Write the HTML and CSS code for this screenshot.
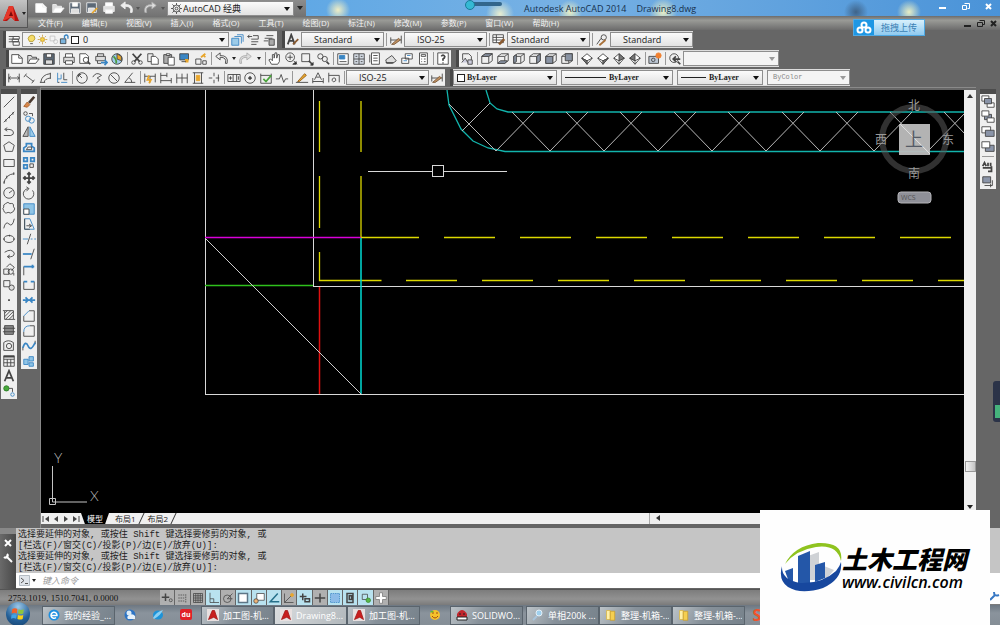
FILE: index.html
```html
<!DOCTYPE html>
<html lang="zh-CN">
<head>
    <meta charset="UTF-8">
    <meta name="viewport" content="width=device-width, initial-scale=1.0">
    <title>Autodesk AutoCAD 2014 - Drawing8.dwg</title>
    <link rel="stylesheet" href="styles.css">
</head>
<body>
<div class="app">
    <header class="top">
        <button class="app-btn" aria-label="应用程序菜单">
            <svg width="18" height="18" viewBox="0 0 18 18"><path d="M1 16L7 1h4l6 15h-4l-4-4-4 4z" fill="#b5120f"/><path d="M7 1h4l2 15-4-4-8 4z" fill="#e5382a"/><path d="M9 6l2 5H7z" fill="#7b0c0a"/></svg>
            <span class="tri"></span>
        </button>
        <div class="top-rows">
            <div class="titlebar">
                <div class="quick">
                    <div class="tools" data-icons="new open save saveas print undo . redo ."></div>
                    <label class="combo workspace"><span data-icon="gear"></span><select aria-label="工作空间"><option>AutoCAD 经典</option></select></label>
                    <button class="more" aria-label="自定义"><span class="tri"></span></button>
                </div>
                <h1><span>Autodesk AutoCAD 2014</span><span>Drawing8.dwg</span></h1>
                <div class="win-btns">
                    <button aria-label="最小化"><svg width="9" height="9"><path d="M1 6h7" stroke="#fff" stroke-width="2"/></svg></button>
                    <button aria-label="还原"><svg width="9" height="9"><path d="M3.500 1.500h5v5h-2M1.500 3.500h4v4h-4z" stroke="#fff" fill="none"/></svg></button>
                    <button aria-label="关闭"><svg width="9" height="9"><path d="M2 2l5 5M7 2L2 7" stroke="#fff" stroke-width="2"/></svg></button>
                </div>
                <div class="slider-mark"></div>
            </div>
            <nav class="menubar">
                <button>文件(F)</button><button>编辑(E)</button><button>视图(V)</button><button>插入(I)</button>
                <button>格式(O)</button><button>工具(T)</button><button>绘图(D)</button><button>标注(N)</button>
                <button>修改(M)</button><button>参数(P)</button><button>窗口(W)</button><button>帮助(H)</button>
                <div class="doc-btns">
                    <button aria-label="最小化文档"><svg width="9" height="9"><path d="M1 7h7" stroke="#222" stroke-width="2"/></svg></button>
                    <button aria-label="还原文档"><svg width="9" height="9"><path d="M3.500 1.500h5v4h-2M1.500 3.500h5v4h-5z" stroke="#222" fill="none"/></svg></button>
                    <button aria-label="关闭文档"><svg width="9" height="9"><path d="M2 2l5 5M7 2L2 7" stroke="#222" stroke-width="2"/></svg></button>
                </div>
            </nav>
        </div>
        <button class="upload"><span class="upload-icon"><svg width="16" height="14" viewBox="0 0 16 14" fill="none" stroke="#fff" stroke-width="2"><circle cx="8" cy="4" r="2.500"/><circle cx="4" cy="9" r="2.500"/><circle cx="12" cy="9" r="2.500"/></svg></span><span class="upload-text">拖拽上传</span></button>
    </header>

    <div class="bars">
        <div class="bar">
            <div class="strip">
                <div class="tools" data-icons="layers"></div>
                <label class="combo layer"><span data-icon="bulb"></span><span data-icon="sun"></span><span data-icon="freeze"></span><span data-icon="lock"></span><i class="swatch"></i><select aria-label="图层"><option>0</option></select></label>
                <div class="tools" data-icons="layercur layerprev layerstate"></div>
            </div>
            <div class="strip styles">
                <div class="tools" data-icons="textstyle"></div>
                <label class="combo wide"><select aria-label="文字样式"><option>Standard</option></select></label>
                <div class="tools" data-icons="| dimstyle"></div>
                <label class="combo wide"><select aria-label="标注样式"><option>ISO-25</option></select></label>
                <div class="tools" data-icons="| tablestyle"></div>
                <label class="combo near"><select aria-label="表格样式"><option>Standard</option></select></label>
                <div class="tools" data-icons="| leader"></div>
                <label class="combo wide"><select aria-label="引线样式"><option>Standard</option></select></label>
            </div>
        </div>
        <div class="bar standard">
            <div class="strip">
                <div class="tools" data-icons="new open save | print preview publish dwf | cut copy paste match block | undo . redo . | pan zoomrt zoomwin zoomprev | props center palette sheet markup calc | help"></div>
            </div>
            <div class="strip">
                <div class="tools" data-icons="views | cubetop cubebottom cubeleft cuberight cubefront cubeback | isosw isose isone isonw | camera | zoomback"></div>
                <label class="combo views off"><select aria-label="视图" disabled><option></option></select></label>
            </div>
        </div>
        <div class="bar">
            <div class="strip">
                <div class="tools" data-icons="dimlin dimali dimarc dimord | radius jog diameter angle | qdim baseline cont dimspace dimbreak | tol centermark inspect jogline | dimedit dimtext dimupdate |"></div>
                <label class="combo wide"><select aria-label="标注样式控制"><option>ISO-25</option></select></label>
                <div class="tools" data-icons="dimstyle"></div>
            </div>
            <div class="strip mono">
                <label class="combo colour"><i class="swatch"></i><select aria-label="颜色"><option>ByLayer</option></select></label>
                <label class="combo linetype"><i class="line"></i><select aria-label="线型"><option>ByLayer</option></select></label>
                <label class="combo weight"><i class="line"></i><select aria-label="线宽"><option>ByLayer</option></select></label>
                <label class="combo plot off"><select aria-label="打印样式" disabled><option>ByColor</option></select></label>
            </div>
        </div>
    </div>

    <main class="work">
        <div class="side draw"><div class="tools" data-icons="line xline pline polygon rect arc circle revcloud spline ellipse ellarc insert mkblock point hatch gradient region table mtext addsel"></div></div>
        <div class="side modify"><div class="tools" data-icons="erase copyobj mirror offset array move rotate scale stretch trim extend breakpt break join chamfer fillet blend explode"></div></div>
        <section class="doc">
            <div class="view">
                <svg class="canvas" viewBox="41 90 924 423" preserveAspectRatio="xMinYMin slice" fill="none">
                    <g stroke="#d8d8d8">
                        <path d="M205.500 90v304H965M313.500 90v196H965" shape-rendering="crispEdges"/>
                        <path d="M368 171.500h64M443 171.500h64M432.500 165.500h11v11h-11z" shape-rendering="crispEdges"/>
                    </g>
                    <path d="M205 237.500h156" stroke="#d800d8" stroke-width="1.500"/>
                    <path d="M205 285.500h108" stroke="#2fc01c" stroke-width="1.500"/>
                    <g stroke="#dcd800" stroke-width="1.300">
                        <path d="M319.500 101v51M319.500 176v52M319.500 252v28.500h62M361 101v51M361 176v61M361 237.500h58"/>
                        <path d="M444 237.500H965" stroke-dasharray="51 25"/>
                        <path d="M406 280.500H965" stroke-dasharray="51 25"/>
                    </g>
                    <path d="M361 238v156" stroke="#00dcd4" stroke-width="1.500"/>
                    <path d="M319.500 287v107" stroke="#e01010" stroke-width="1.500"/>
                    <path d="M205 238l156 156" stroke="#ccc"/>
                    <path d="M447 90l2 15 12 24 12 12 15 7 17 3.500H965M486 90l4 13 7 6 11 3H965" stroke="#12b4ac" stroke-width="1.300"/>
                    <path d="M449 104l47 47 38-39M490 103l-28 28M512 112l38 39 38-39M566 112l38 39 38-39M620 112l38 39 38-39M674 112l38 39 38-39M728 112l38 39 38-39M782 112l38 39 38-39M836 112l38 39 38-39M890 112l38 39 38-39M944 112l21 22" stroke="#b9b9b9"/>
                    <path d="M52.500 466v36H87M49.500 498.500h6v6h-6z" stroke="#c4c4c4"/>
                    <g class="ucs"><text x="54" y="463">Y</text><text x="90" y="501">X</text></g>
                    <circle cx="914" cy="139" r="32" stroke="#5a5a5a" stroke-opacity=".55" stroke-width="6"/>
                    <path d="M899 124h31v31h-31z" fill="#bdbdbd" fill-opacity=".95"/>
                    <path d="M900 124l30 30" stroke="#ddd"/>
                    <g class="compass"><text x="914" y="110">北</text><text x="881" y="144">西</text><text x="948" y="144">东</text><text x="914" y="178">南</text></g>
                    <text class="face" x="914" y="146">上</text>
                    <rect x="898" y="192" width="33" height="11" rx="3" fill="#8f9098" stroke="#b4b4b8"/>
                    <text class="wcs" x="901" y="200">WCS</text>
                </svg>
                <div class="vscroll"><span class="tri up"></span><span class="thumb"></span><span class="tri"></span></div>
            </div>
            <div class="tabs">
                <div class="tab-nav">
                    <button aria-label="第一个"><svg width="8" height="8"><path d="M1 1v6" stroke="#444"/><path d="M7 1v6L3 4z" fill="#444"/></svg></button>
                    <button aria-label="上一个"><svg width="8" height="8"><path d="M6 1v6L2 4z" fill="#444"/></svg></button>
                    <button aria-label="下一个"><svg width="8" height="8"><path d="M2 1v6l4-3z" fill="#444"/></svg></button>
                    <button aria-label="最后一个"><svg width="8" height="8"><path d="M7 1v6" stroke="#444"/><path d="M1 1v6l4-3z" fill="#444"/></svg></button>
                </div>
                <button class="tab active">模型</button>
                <button class="tab">布局1</button>
                <button class="tab">布局2</button>
                <div class="hscroll"><span class="tri left"></span></div>
            </div>
        </section>
        <div class="side order"><div class="tools" data-icons="front back above under | anno hatchback"></div></div>
    </main>

    <section class="command">
        <div class="cmd-grip">
            <button aria-label="关闭"><svg width="8" height="8"><path d="M1 1l6 6M7 1L1 7" stroke="#fff" stroke-width="2"/></svg></button>
            <button aria-label="自定义"><svg width="10" height="10"><path d="M3 3l6 6" stroke="#fff" stroke-width="2"/><path d="M4 1a2 2 0 1 1-3 3" stroke="#fff" stroke-width="2" fill="none"/></svg></button>
        </div>
        <div class="cmd-body">
            <div class="history">
                <p>选择要延伸的对象, 或按住 Shift 键选择要修剪的对象, 或</p>
                <p>[栏选(F)/窗交(C)/投影(P)/边(E)/放弃(U)]:</p>
                <p>选择要延伸的对象, 或按住 Shift 键选择要修剪的对象, 或</p>
                <p>[栏选(F)/窗交(C)/投影(P)/边(E)/放弃(U)]:</p>
            </div>
            <div class="prompt">
                <svg width="11" height="11"><path d="M.5.5h10v10H.5z" fill="#dfe4ea" stroke="#b4bcc4"/><path d="M2 3l3 2.500L2 8M6 8.500h3" stroke="#555" fill="none"/></svg>
                <span class="tri"></span>
                <input type="text" placeholder="键入命令" aria-label="键入命令">
            </div>
        </div>
    </section>

    <div class="status">
        <span class="coords">2753.1019, 1510.7041, 0.0000</span>
        <div class="tools" data-icons="infer snap grid ortho* polar osnap* osnap3d* otrack* ducs dyn* lwt tpy* qp* sc* plus"></div>
    </div>

    <footer class="taskbar">
        <button class="start" aria-label="开始"><svg width="14" height="14" viewBox="0 0 12 12"><path d="M1 2q2-1.500 4.500-.3L5 5.500Q3 4.500.5 5.500z" fill="#f0622a"/><path d="M6.500 2q2 1 4.500 0l-.5 3.500q-2 1-4.500 0z" fill="#8cc63f"/><path d="M.5 6.700q2-1 4.300 0L4.300 10Q2.500 9 0 10z" fill="#3fa4e8"/><path d="M6 6.800q2 1 4.500 0L10 10.300q-2 1-4.500 0z" fill="#fcd116"/></svg></button>
        <button class="task"><svg width="12" height="12" viewBox="0 0 12 12"><circle cx="6" cy="6" r="5.500" fill="#1d8fe0"/><path d="M3 6.500h6A3 3 0 1 0 8 8.500" stroke="#fff" stroke-width="1.500" fill="none"/></svg><span>我的经验_...</span></button>
        <div class="pins">
            <button aria-label="浏览器"><svg width="12" height="12"><circle cx="6" cy="6" r="5.500" fill="#2d74c4"/><circle cx="5" cy="4" r="2.500" fill="#dcecf8"/><path d="M4 10a4 3 0 0 1 7-3v3z" fill="#e8f2fa"/></svg></button>
            <button aria-label="IE"><svg width="12" height="12"><ellipse cx="6" cy="6" rx="5" ry="4.500" fill="#1c93d8"/><path d="M1 9q3-6 10-8Q9 6 2 10z" fill="#8ad0f4"/></svg></button>
            <button class="du">du</button>
        </div>
        <div class="group">
            <button class="task"><span data-icon="acad"></span><span>加工图-机...</span></button>
            <button class="task current"><span data-icon="acad"></span><span>Drawing8...</span></button>
            <button class="task"><span data-icon="acad"></span><span>加工图-机...</span></button>
        </div>
        <button class="pin" aria-label="聊天"><svg width="12" height="12"><circle cx="6" cy="6" r="5" fill="#f5c22c"/><path d="M3 4h2M7 4h2M3 7q3 4 6 0" stroke="#a34a12" fill="none"/><path d="M1 2h4l-2 2z" fill="#63b832"/></svg></button>
        <button class="task"><svg width="12" height="12"><path d="M1 5q5-8 10 0v3H1z" fill="#c3262d"/><path d="M3 5h2M7 5h2M1 8h10v3H1z" stroke="#222" fill="#fff"/></svg><span>SOLIDWO...</span></button>
        <div class="group last">
            <button class="task"><svg width="12" height="12"><path d="M5 7l-4 4" stroke="#a8c4dc" stroke-width="2"/><circle cx="7" cy="4" r="3" fill="#9fd0ee" stroke="#e4f0f8"/></svg><span>单相200k ...</span></button>
            <button class="task"><span data-icon="folder"></span><span>整理-机箱-...</span></button>
            <button class="task"><span data-icon="folder"></span><span>整理-机箱-...</span></button>
        </div>
        <button class="pin sogou" aria-label="输入法">S</button>
    </footer>

    <div class="edge-meter"></div>
    <button class="tray" aria-label="工具"><svg width="10" height="14"><path d="M0 11l5-5M4 3q0 5 5 3" stroke="#3878c4" stroke-width="2" fill="none"/></svg></button>

    <aside class="brand">
        <svg width="62" height="52" viewBox="0 0 62 52">
            <path d="M28 14l11-4v28H28z" fill="#cfd2d6"/><path d="M44 24l10 4-10 12z" fill="#cfd2d6"/>
            <path d="M18 14l12-5v32l-12 1z" fill="#2457a8"/><path d="M5 29l8-3v14H9z" fill="#2457a8"/><path d="M35 23l10-3v16l-10 4z" fill="#2457a8"/>
            <path d="M5 22Q14 4 38 1q26-1 23 18-4-17-25-14Q16 8 5 22z" fill="#8fc31f"/>
            <path d="M2 24q-1 14 18 17 22 1 36-12 4-5 5-9 2 17-18 26-22 7-35-1Q-2 38 2 24z" fill="#17479e"/>
        </svg>
        <div class="brand-text"><strong>土木工程网</strong><span>www.civilcn.com</span></div>
    </aside>
</div>
<script src="script.js"></script>
</body>
</html>
```

FILE: styles.css
```css
* { box-sizing: border-box; }
body { margin: 0; font-family: "Open Sans", "Noto Sans CJK SC", sans-serif; font-size: 9px; color: #222; background: #666; }
button, select, input { font: inherit; color: inherit; margin: 0; padding: 0; border: 0; background: none; border-radius: 0; }
svg { display: block; flex: none; }
p, h1 { margin: 0; font-weight: normal; }

.app { position: relative; display: flex; flex-direction: column; height: 100vh; overflow: hidden; }
.tri { display: block; width: 0; height: 0; flex: none; border: 3px solid transparent; border-top: 4px solid #222; border-bottom: 0; }
.tri.up { border-top: 0; border-bottom: 4px solid #333; }
.tri.left { border: 3px solid transparent; border-right: 4px solid #333; border-left: 0; }

/* title bar and menu */
.top { position: relative; display: flex; height: 30px; flex: none; background: #777; }
.app-btn { display: flex; align-items: center; gap: 2px; width: 28px; height: 28px; padding-left: 2px; background: linear-gradient(#c4c4c4, #8b8b8b); border: 1px solid #555; border-width: 0 1px 1px 0; }
.app-btn .tri { border-width: 3px 2px 0; }
.top-rows { flex: 1; }
.titlebar {
    position: relative;
    display: flex;
    align-items: center;
    height: 16px;
    background:
        radial-gradient(circle at 30px 10px, #f0eec4 0, transparent 12px) 280px 0 / 60px 16px no-repeat,
        radial-gradient(circle at 30px 14px, #e9eed0 0, transparent 14px) 442px 0 / 60px 16px no-repeat,
        radial-gradient(circle at 20px 12px, #e9eec4 0, transparent 12px) 522px 0 / 60px 16px no-repeat,
        radial-gradient(circle at 20px 12px, #e9eec4 0, transparent 14px) 615px 0 / 60px 16px no-repeat,
        radial-gradient(circle at 20px 12px, #e9eec4 0, transparent 12px) 861px 0 / 60px 16px no-repeat,
        radial-gradient(circle at 20px 12px, #3f6388 0, transparent 12px) 808px 0 / 60px 16px no-repeat,
        linear-gradient(90deg, #489fe6, #77b1e4 55%, #4a93d8);
}
.quick { display: flex; align-items: center; height: 16px; padding-left: 4px; background: linear-gradient(#8c8c8c, #737373); }
.quick .tools .tool { width: 17px; color: #eee; }
.quick .tools .drop { width: 8px; }
.quick .tools .drop .tri { border-top-color: #555; }
.workspace { width: 127px; }
.more { width: 12px; height: 16px; display: flex; align-items: center; justify-content: center; }
h1 { position: absolute; left: 496px; display: flex; gap: 10px; font-size: 9px; color: #16304d; white-space: nowrap; }
.win-btns, .doc-btns { display: flex; margin-left: auto; }
.win-btns { gap: 14px; padding: 0 7px 4px 0; }
.slider-mark { position: absolute; left: 440px; top: 2px; width: 34px; height: 4px; border-radius: 2px; background: #33668c; }
.slider-mark::before { content: ""; position: absolute; left: -3px; top: -2px; width: 8px; height: 8px; border-radius: 50%; background: #35b9d4; border: 1px solid #1a7a98; }
.menubar { display: flex; align-items: center; height: 14px; padding-left: 10px; gap: 19px; font-size: 8px; line-height: 14px; color: #f2f2f2; background: linear-gradient(#6c6c6c, #9a9b97 30%, #6c6c6c); }
.menubar button { white-space: nowrap; }
.doc-btns { gap: 4px; padding-right: 2px; }
.upload { position: absolute; right: 75px; top: 19px; display: flex; height: 17px; z-index: 2; border: 1px solid #4fa8e2; }
.upload-icon { display: flex; align-items: center; width: 20px; height: 15px; padding-left: 2px; background: #1e97e4; }
.upload-text { width: 50px; line-height: 15px; color: #3b7fb4; background: linear-gradient(#d8f0fc, #8fcaf0); }

/* toolbars */
.bars { display: flex; flex-direction: column; gap: 2px; padding: 1px 0; flex: none; background: #666; }
.bar { display: flex; gap: 8px; height: 17px; padding-left: 6px; }
.bar.standard { padding-left: 9px; }
.strip { display: flex; align-items: center; height: 17px; background: #efefef; border: 1px solid #ddd; border-width: 1px 0; box-shadow: -3px 0 0 #484848; }
.tools { display: flex; align-items: center; }
.tool { display: flex; align-items: center; justify-content: center; width: 16px; height: 15px; color: #444; }
.tool svg, [data-icon] svg { width: 14px; height: 14px; }
.drop { width: 9px; display: flex; justify-content: center; }
.drop .tri { border-width: 3px 2px 0; }
.sep { width: 1px; height: 13px; margin: 0 1px 0 2px; background: #999; }
.combo { position: relative; display: flex; align-items: center; height: 15px; padding-left: 3px; background: linear-gradient(#fbfbfb, #e2e2e2); border: 1px solid #8e8e8e; }
.combo::after { content: ""; position: absolute; right: 3px; top: 5px; border: 3px solid transparent; border-top: 4px solid #111; border-bottom: 0; }
.combo select { flex: 1; min-width: 0; height: 13px; line-height: 13px; appearance: none; opacity: 1; }
.combo.off { background: #f4f4f4; color: #888; }
.combo.off::after { border-top-color: #999; }
.layer { width: 207px; background: #f3f3f3; }
.layer [data-icon] svg { width: 11px; height: 11px; }
.workspace svg { margin-right: 1px; width: 11px; height: 11px; }
.combo.wide { padding-left: 12px; width: 83px; }
.styles .combo { width: 83px; }
.views { width: 96px; }
.swatch { width: 8px; height: 8px; margin-right: 2px; background: #fff; border: 1px solid #222; }
.layer .swatch { margin: 0 4px 0 1px; }
.line { height: 1px; background: #222; margin-right: 3px; }
.mono { gap: 4px; font-family: "Liberation Serif", serif; font-weight: bold; font-size: 8px; }
.colour { width: 104px; }
.linetype { width: 112px; }
.linetype .line { width: 41px; }
.weight { width: 86px; }
.weight .line { width: 25px; }
.plot { width: 83px; padding-left: 5px; font-family: "Liberation Mono", monospace; font-weight: normal; font-size: 7px; }

/* work area */
.work { display: flex; flex: 1; min-height: 0; padding: 0 4px 0 1px; align-items: flex-start; background: #666; }
.side { width: 16px; margin-top: 2px; padding-top: 5px; background: #4c4c4c; }
.side .tools { display: grid; grid-auto-rows: 1fr; background: #efefef; }
.draw .tools { height: 305px; }
.modify { margin-left: 4px; }
.modify .tools { height: 275px; }
.order { margin-left: 4px; }
.order .tools { grid-auto-rows: auto; }
.order .sep { width: 12px; height: 1px; margin: 2px; }
.doc { flex: 1; align-self: stretch; display: flex; flex-direction: column; margin-left: 3px; padding: 2px 0 4px; min-width: 0; border-top: 1px solid #8a8a8a; border-left: 1px solid #888; }
.view { display: flex; flex: 1; min-height: 0; }
.canvas { flex: 1; min-width: 0; height: 100%; background: #000; }
.vscroll { display: flex; flex-direction: column; align-items: center; width: 12px; padding: 4px 0; background: #f0f0f0; }
.thumb { width: 11px; height: 11px; margin: auto 0 33px; background: linear-gradient(90deg, #f4f4f4, #c4c4c4); border: 1px solid #999; }
.ucs text { font-family: "Lato", sans-serif; font-weight: 300; font-size: 14px; fill: #bbb; }
.compass text { font-size: 12px; fill: #999; text-anchor: middle; }
.face { font-size: 18px; fill: #555b66; text-anchor: middle; }
.wcs { font-size: 7px; fill: #555; }
.tabs { display: flex; align-items: center; height: 11px; flex: none; background: #f0f0f0; line-height: 11px; }
.tab-nav { display: flex; gap: 2px; padding: 0 1px; }
.tab { position: relative; height: 11px; padding: 0 6px; font-size: 8px; white-space: nowrap; }
.tab::after { content: ""; position: absolute; right: 0; top: 0; width: 1px; height: 11px; background: #333; transform: skewX(-25deg); }
.tab.active { color: #fff; background: #000; clip-path: polygon(0 0, 100% 0, 86% 100%, 14% 100%); }
.hscroll { width: 327px; margin-left: auto; height: 11px; padding: 2px 0 0 6px; border-left: 1px solid #aaa; }

/* command line */
.command { display: flex; height: 61px; flex: none; }
.cmd-grip { display: flex; flex-direction: column; align-items: center; gap: 6px; width: 16px; padding-top: 5px; background: linear-gradient(90deg, #6a6a6a, #484848); border-top: 6px solid #888; }
.cmd-body { flex: 1; }
.history { height: 45px; padding: 2px 2px 0; background: #c5c5c5; font-family: "Liberation Mono", "Noto Sans CJK SC", monospace; line-height: 10px; white-space: nowrap; }
.history p { height: 10px; }
.history p + p { margin-top: 1px; }
.prompt { display: flex; align-items: center; gap: 2px; height: 15px; padding-left: 3px; background: #fff; }
.prompt .tri { border-width: 3px 2px 0; }
.prompt input { flex: 1; padding-left: 4px; font-style: italic; outline: 0; }
.prompt input::placeholder { color: #999; }

.status { display: flex; align-items: center; height: 16px; flex: none; background: linear-gradient(#7c7c7c, #929292 60%, #7a7a7a); border-top: 1px solid #555; }
.coords { width: 160px; padding-left: 8px; font-family: "Liberation Serif", serif; color: #111; }
.status .tools { display: grid; grid-auto-flow: column; grid-auto-columns: 1fr; width: 229px; }
.status .tool { width: auto; border-right: 1px solid #666; background: #b0b0b0; }
.status .tool.on { background: #b9e2ef; }
.status .tool svg { width: 12px; height: 12px; }

/* taskbar */
.taskbar { display: flex; align-items: center; height: 20px; flex: none; color: #fff; background: linear-gradient(#6d7782, #8a939c 40%, #858e96); }
.start { display: flex; align-items: center; justify-content: center; width: 24px; height: 24px; margin: -2px 12px 0 6px; border-radius: 50%; background: radial-gradient(circle at 50% 20%, #9cc8e8, #235f97 60%, #163f68); }
.task { display: flex; align-items: center; gap: 4px; width: 73px; height: 19px; padding: 0 2px 0 5px; border: 1px solid #5a646d; background: linear-gradient(120deg, #bcc3c8, #87919a 45%, #77828b); white-space: nowrap; }
.task span:last-child { overflow: hidden; }
.task svg { width: 12px; height: 12px; }
.task.current { background: linear-gradient(120deg, #dadddf, #b2b8bc); }
.pins { display: flex; gap: 16px; padding: 0 9px; }
.du { width: 12px; height: 11px; border-radius: 2px; background: #e12027; font-size: 7px; line-height: 10px; font-weight: bold; }
.group { display: flex; }
.group.last { margin-left: 3px; }
.pin { width: 30px; display: flex; justify-content: center; }
.sogou { margin-left: 4px; width: 16px; font-size: 16px; line-height: 16px; font-weight: bold; color: #f0522b; }

/* things lying over the window */
.edge-meter { position: absolute; right: 0; top: 381px; width: 7px; height: 41px; border-radius: 3px 0 0 3px; background: linear-gradient(90deg, transparent 2px, #45b37c 2px) 0 24px / 7px 13px no-repeat, #2b3348; }
.tray { position: absolute; right: 0; bottom: 21px; width: 10px; height: 16px; background: #fff; }
.brand { position: absolute; right: 10px; bottom: 0; display: flex; align-items: center; width: 230px; height: 115px; padding-left: 20px; background: #fefefe; color: #000; }
.brand-text { display: flex; flex-direction: column; font-style: italic; white-space: nowrap; }
.brand-text strong { font-family: "Noto Sans CJK SC", sans-serif; font-weight: 900; font-size: 25px; line-height: 28px; }
.brand-text span { font-weight: 600; font-size: 16px; line-height: 20px; }
```

FILE: script.js
```js
// 16x16 icon bodies; strokes use currentColor unless a colour is given
const B = '#3a86c4', Y = '#e8a62c';
const cube = face => `<path d="M2 5h8v8H2z"/><path d="M2 5l4-3h8v8l-4 3M10 5l4-3"/><path d="${face}" fill="#8a94a4"/>`;
const iso = face => `<path d="M8 2l6 5-6 7-6-7z" fill="#fff"/><path d="M2 7l6 3 6-3M8 10v4"/><path d="${face}" fill="#777"/>`;
const icons = {
    new: '<path d="M2 3h8l4 4v6H2z" fill="#fff"/><path d="M10 3v4h4"/>',
    open: '<path d="M2 13V4h4l1 2h5v2" fill="#ddd"/><path d="M2 13l3-5h10l-4 5z" fill="#fff"/>',
    save: '<path d="M2 2h12v12H2z" fill="#5b6876"/><path d="M5 2h6v4H5z" fill="#fff"/><path d="M4 9h8v5H4z" fill="#ddd"/>',
    saveas: '<path d="M2 2h11v11H2z" fill="#5b6876"/><path d="M4 8h7v5H4z" fill="#ddd"/><path d="M8 14l6-6" stroke="#e8a62c" stroke-width="2"/>',
    print: '<path d="M4 6V2h8v4" fill="#fff"/><path d="M2 6h12v6H2z" fill="#ddd"/><path d="M4 10h8v4H4z" fill="#fff"/>',
    preview: '<path d="M2 2h7l3 3v8H2z" fill="#fff"/><circle cx="9" cy="9" r="3"/><path d="M11 11l3 3" stroke-width="2"/>',
    publish: `<path d="M4 5V2h7v3M2 5h11v5H2z" fill="#ddd"/><path d="M4 10v3h4"/><path d="M8 12h6M12 9l3 3-3 3" stroke="${B}" stroke-width="2"/>`,
    dwf: `<circle cx="8" cy="8" r="6" fill="#9fcbe8"/><path d="M8 2l5 3v5l-5-2z" fill="${Y}"/><path d="M4 5q4 4 3 8" stroke="#4a9a3c" stroke-width="2"/>`,
    cut: '<path d="M3 2l8 9M13 2L5 11" stroke-width="2"/><circle cx="4" cy="12" r="2"/><circle cx="12" cy="12" r="2"/>',
    copy: '<path d="M2 2h6v9H2z"/><path d="M6 5h5l3 3v6H6z" fill="#fff"/>',
    paste: '<path d="M2 3h9v10H2z" fill="#aaa"/><path d="M5 2h4v2H5zM7 6h7v9H7z" fill="#fff"/>',
    match: `<path d="M2 2h10v7H2z" fill="${B}"/><path d="M10 8v4" stroke="${Y}" stroke-width="4"/><path d="M4 11h5"/>`,
    block: `<path d="M2 8h6v6H2zM10 10h4v4h-4z"/><path d="M8 6l5-4M13 6l-3-3" stroke="${Y}" stroke-width="2"/>`,
    undo: '<path d="M13 13q2-7-6-7v3L2 5l5-4v3q10 0 8 9z" fill="#eee"/>',
    redo: '<path d="M3 13q-2-7 6-7v3l5-4-5-4v3q-10 0-8 9z" fill="#ddd" stroke="#aaa"/>',
    pan: '<path d="M4 14L1 9l2-1 2 2V3h2v4l1-6h2v6l1-4h2v8l-2 3z" fill="#fff"/>',
    zoomrt: '<circle cx="7" cy="6" r="5"/><path d="M4 6h6M7 3v6M11 10l4 4" /><path d="M10 14h4v-3z" fill="#222"/>',
    zoomwin: '<path d="M2 2h9v9H2z"/><path d="M10 10l4 4" stroke-width="2"/><path d="M12 15h3v-3z" fill="#222"/>',
    zoomprev: '<circle cx="5" cy="5" r="3"/><circle cx="10" cy="8" r="3"/><path d="M12 11l3 3" stroke-width="2"/>',
    zoomback: '<circle cx="7" cy="7" r="5"/><path d="M14 8H6M9 5L6 8l3 3M11 11l3 3" stroke-width="2"/>',
    props: `<path d="M2 2h12v12H2z" fill="#fff"/><path d="M4 4h6v4H4z" fill="${B}" stroke="${B}"/><path d="M4 11h8"/>`,
    center: '<path d="M2 2h12v12H2zM8 2v12M2 8h12M4 5h2M10 5h2M4 11h2M10 11h2" fill="#d4dbe4"/>',
    palette: '<path d="M4 1h9v13H4z" fill="#fff"/><path d="M6 4h5M6 7h5M6 10h5M2 3v9"/>',
    sheet: '<path d="M2 9l7-5 5 6-4 3H3z" fill="#ddd"/><path d="M2 12h9"/>',
    markup: `<path d="M6 2h8v6H6zM2 7h8v6H2z" fill="#fff"/><path d="M8 4h4M4 10h4" stroke="${B}"/>`,
    calc: '<path d="M4 1h9v13H4z" fill="#fff"/><path d="M6 3h5v2H6zM6 8h1M9 8h2M6 11h1M9 11h2"/>',
    help: '<path d="M2 1h12v13H2z" fill="#fff"/><path d="M6 5q2-3 4 0 0 2-2 3v2M8 12v1" stroke-width="2"/>',
    views: '<path d="M3 9V2h7l3 3v4"/><path d="M2 12l4-5 3 5M9 9h5v5H9z" fill="#ccd"/>',
    cubetop: cube('M2 5l4-3h8l-4 3z'), cubebottom: cube('M2 13l3-3h8l-3 3z'), cubeleft: cube('M2 5l3-2v8l-3 2z'),
    cuberight: cube('M10 5l4-3v8l-4 3z'), cubefront: cube('M2 5h8v8H2z'), cubeback: cube('M6 2h8v8H6z'),
    isosw: iso('M2 7l6 3v4z'), isose: iso('M14 7l-6 3v4z'), isone: iso('M8 2l6 5-6 3z'), isonw: iso('M8 2L2 7l6 3z'),
    camera: '<path d="M1 5h11v8H1z" fill="#bbc6d4"/><circle cx="6" cy="9" r="2"/><circle cx="12" cy="4" r="3" fill="#f08030" stroke="#f08030"/>',
    layers: '<path d="M2 4h7M2 7h6M2 10h5"/><path d="M7 4h7v3H7zM6 7h7v3H6zM7 10h7v4H7z" fill="#fff"/>',
    bulb: '<path d="M5 11q-4-5 0-8 4-3 7 0 3 4-2 8z" fill="#f5dc6a" stroke="#a58a1c"/><path d="M6 14h4"/>',
    sun: '<circle cx="8" cy="8" r="3" fill="#f5d24a" stroke="#c49018"/><path d="M8 1v3M8 12v3M1 8h3M12 8h3M3 3l2 2M11 11l2 2M13 3l-2 2M3 13l2-2" stroke="#c49018"/>',
    freeze: '<g stroke="#bbb"><path d="M3 3h7v7H3z"/><circle cx="11" cy="11" r="3"/></g>',
    lock: `<path d="M2 7h8v7H2z" fill="#7db4dc"/><path d="M8 7V3q3-3 5 0v4" stroke="${B}" stroke-width="2"/>`,
    layercur: `<g stroke="${B}"><path d="M2 6h8v8H2z" fill="#9ccbe8"/><path d="M5 4h8v8M8 2h7v8"/></g>`,
    layerprev: '<path d="M2 4h5M4 2L2 4l2 2M6 7h8M6 10h8M6 13h6M8 3h6v4"/>',
    layerstate: '<path d="M5 3h8M3 6h9M2 9h5"/><path d="M8 7h6v7H8z" fill="#aaa"/>',
    textstyle: '<path d="M2 13L6 2l4 11M3 9h6" stroke-width="2"/><path d="M8 13l6-6" stroke="#8a5a30" stroke-width="2"/>',
    dimstyle: '<path d="M2 12V5M14 12V3M2 8h12"/><path d="M3 13l8-7 2 2-7 5z" fill="#c09060" stroke="#7a5a3c"/>',
    tablestyle: '<path d="M1 2h12v9H1zM1 5h12M5 2v9M1 8h12" fill="#fff"/><path d="M8 13l6-6" stroke="#8a5a30" stroke-width="3"/>',
    leader: '<circle cx="10" cy="5" r="3"/><path d="M2 13l5-7"/><path d="M5 14l7-6" stroke="#a87038" stroke-width="2"/>',
    dimlin: '<path d="M2 3v10M14 3v10M2 8h12M4 6L2 8l2 2M12 6l2 2-2 2"/>',
    dimali: '<path d="M3 5l9 7M1 7l3-4M10 14l3-4"/>',
    dimarc: '<path d="M2 13Q3 4 13 3M6 13q0-4 7-5M1 13h6M13 2v7"/>',
    dimord: `<path d="M3 2v11M3 9h4V4M7 13h7" stroke="${B}"/><path d="M10 2v8h4M3 13h2"/>`,
    radius: '<circle cx="8" cy="8" r="6"/><path d="M8 8L4 4M4 7V4h3"/>',
    jog: '<path d="M2 7q4-7 10-2M12 5l-5 3 3 2-4 4"/>',
    diameter: '<circle cx="8" cy="8" r="6"/><path d="M4 4l8 8"/>',
    angle: '<path d="M11 2L2 13h12M10 13q0-4-3-5"/>',
    qdim: `<path d="M2 3v10M14 3v10M2 6h12M8 6v7"/><path d="M7 5l-2 5h4l-2 4" stroke="${Y}" stroke-width="2"/>`,
    baseline: '<path d="M2 2v12M9 2v5M14 8v6M2 5h7M2 11h12"/>',
    cont: '<path d="M2 3v11M8 3v11M14 3v11M2 8h12"/>',
    dimspace: `<path d="M2 2h12M2 14h12M4 2v12M12 2v12"/><path d="M6 5h4v6H6z" fill="${Y}" stroke="${Y}"/>`,
    dimbreak: '<path d="M2 8h4M10 8h4M8 2v4M8 10v4M13 4v8"/>',
    tol: '<path d="M1 4h14v8H1zM7 4v8M11 4v8M2 8h4M4 6v4M13 6v4"/>',
    centermark: '<circle cx="8" cy="8" r="6"/><path d="M8 6v4M6 8h4" stroke-width="2"/>',
    inspect: '<path d="M2 3v11h12V3M2 5h12"/><path d="M5 9l3 3 6-7" stroke="#4aa43c" stroke-width="2"/>',
    jogline: '<path d="M1 9h4l2-5 3 9 2-4h3"/>',
    dimedit: `<path d="M1 13h14"/><path d="M3 12l8-9 2 2-8 7z" fill="${Y}" stroke="#94601c"/>`,
    dimtext: '<path d="M4 10l4-8 4 8M6 7h4M2 8v6M14 8v6M2 12h12"/>',
    dimupdate: '<path d="M2 2v11M2 5h12v8M6 9q4-3 4 2-3 3-4 0z"/>',
    line: '<path d="M2 14L14 2"/>',
    xline: '<path d="M2 14L14 2"/><path d="M4 12h1M8 8h1M12 4h1" stroke-width="3"/>',
    pline: '<path d="M2 12h8q4-1 3-4-1-3-5-3l-4 0M6 3L3 5l3 2"/>',
    polygon: '<path d="M8 2l6 4-2 7H4L2 6z"/>',
    rect: '<path d="M2 4h12v8H2z"/>',
    arc: '<path d="M2 14Q4 4 14 3"/><path d="M2 13h1M5 7h1M13 3h1" stroke-width="3"/>',
    circle: '<circle cx="8" cy="8" r="6"/><path d="M8 8l4-3"/>',
    revcloud: '<path d="M4 3q3-3 5 0 5-1 4 3 3 3 0 6-3 3-6 1-4 2-5-2-2-3 0-4-1-3 2-4z"/>',
    spline: '<path d="M2 13q2-9 6-5t6-6"/>',
    ellipse: '<ellipse cx="8" cy="8" rx="6" ry="4"/><path d="M2 8h1M8 4h1M13 8h1" stroke-width="2"/>',
    ellarc: '<path d="M3 6q8-5 11 1 0 5-7 4M9 9l-3 2 3 2"/>',
    insert: '<path d="M2 8h6v6H2zM5 6l4-4 5 4-3 4"/><circle cx="10" cy="11" r="3"/><path d="M13 14h1" stroke-width="3"/>',
    mkblock: '<path d="M2 3h7v7H2z"/><circle cx="11" cy="11" r="3" fill="#ddd"/>',
    point: '<path d="M7 8h2" stroke-width="2"/>',
    hatch: '<path d="M3 3h10v10H3zM3 6l3-3M3 10l7-7M4 13l9-9M8 13l5-5M1 3h2M13 13h2"/>',
    gradient: '<path d="M3 3h10v10H3z" fill="#8b8b8b"/><path d="M1 6h14M1 10h14"/>',
    region: '<path d="M2 4q5-4 11 0v9H2z"/><circle cx="8" cy="8" r="3"/>',
    table: '<path d="M2 2h12v12H2zM2 6h12M2 10h12M6 6v8M10 6v8"/><path d="M2 3h12" stroke-width="2"/>',
    mtext: '<path d="M3 14L8 2l5 12M5 10h6" stroke-width="2"/>',
    addsel: `<circle cx="5" cy="5" r="3" fill="#46a83a" stroke="#2e7d26"/><path d="M8 5h4v4"/><circle cx="12" cy="12" r="2" stroke="${B}"/>`,
    erase: `<path d="M2 13l4-5 3 3-3 3z" fill="#d9874a" stroke="#a5602c"/><path d="M8 9l6-7" stroke="#4a3a30" stroke-width="3"/>`,
    copyobj: `<circle cx="4" cy="4" r="2"/><path d="M8 4h4v3"/><g stroke="${B}"><circle cx="7" cy="10" r="3"/><circle cx="11" cy="12" r="3"/></g>`,
    mirror: `<path d="M7 2v11H1z" fill="#bbb"/><path d="M9 2v11h6z" fill="#9ccbe8" stroke="${B}"/>`,
    offset: `<path d="M2 13V9l3-2V4h6v3l3 2v4z" stroke="${B}" stroke-width="2"/><path d="M5 11h6V8H7z"/>`,
    array: `<g stroke="${B}" stroke-width="2"><path d="M2 2h4v4H2zM10 2h4v4h-4zM2 10h4v4H2z"/></g><path d="M9 9h4v4H9z"/>`,
    move: '<path d="M8 2v12M2 8h12M6 4l2-2 2 2M6 12l2 2 2-2M4 6L2 8l2 2M12 6l2 2-2 2" stroke-width="2"/>',
    rotate: '<path d="M7 3a6 6 0 1 0 5 2M5 1l3 2-3 3"/>',
    scale: `<path d="M2 2h12v12H2z" fill="#8fc4e6" stroke="${B}"/><path d="M2 8h6v6H2z" fill="#fff"/>`,
    stretch: `<path d="M3 2h6l5 12H3z" stroke="${B}"/><path d="M3 2v12h6M5 10h5M8 8l3 2-3 2"/>`,
    trim: `<path d="M10 2L6 14"/><path d="M1 8h6M10 8h2M14 8h2" stroke="${B}"/>`,
    extend: `<path d="M14 2l-4 12"/><path d="M1 8h10" stroke="${B}" stroke-width="2"/>`,
    breakpt: `<path d="M2 14V4"/><path d="M2 4h12M12 2v4" stroke="${B}" stroke-width="2"/>`,
    break: `<path d="M2 13V4M14 13V4M2 13h12"/><path d="M2 4h4M10 4h4" stroke="${B}" stroke-width="2"/>`,
    join: `<path d="M1 8h14M4 5l3 3-3 3M12 5L9 8l3 3" stroke="${B}" stroke-width="2"/>`,
    chamfer: `<path d="M2 14V8M8 2h6v12H2"/><path d="M2 8l6-6" stroke="${B}"/>`,
    fillet: `<path d="M2 14V9M9 2h5v12H2"/><path d="M2 9q0-7 7-7" stroke="${B}"/>`,
    blend: `<path d="M1 13V9M15 2v4"/><path d="M1 10q3-9 6-2t8-4" stroke="${B}" stroke-width="2"/>`,
    explode: `<g stroke="${B}" fill="#8fc4e6"><path d="M2 6h5v6H2zM8 3h5v5H8zM8 10h5v4H8z"/></g>`,
    front: '<path d="M1 1h8v6H1zM7 9h8v5H7z" fill="#fff"/><path d="M4 4h8v6H4z" fill="#8a94a8"/>',
    back: '<path d="M4 5h8v6H4z" fill="#8a94a8"/><path d="M1 1h8v6H1zM7 9h8v5H7z" fill="#fff"/>',
    above: '<path d="M1 2h10v7H1z" fill="#fff"/><path d="M5 6h10v7H5z" fill="#8a94a8"/>',
    under: '<path d="M5 6h10v7H5z" fill="#8a94a8"/><path d="M1 2h9v7H1z" fill="#fff"/>',
    anno: '<path d="M2 7l2-4 2 4M8 3v4M11 3v4M2 9h9M12 7v6H8" stroke-width="2"/>',
    hatchback: '<path d="M2 2h9v7H2z" fill="#8a94a8"/><path d="M4 12h9V6M11 14v-4"/>',
    infer: '<path d="M1 7h10M6 2v10" stroke-width="2"/><circle cx="13" cy="11" r="2"/>',
    snap: '<path d="M3 4h8M3 8h8M3 12h8M13 3v11" stroke-dasharray="2 1"/>',
    grid: '<path d="M2 2h12v12H2zM5 2v12M8 2v12M11 2v12M2 5h12M2 8h12M2 11h12"/>',
    ortho: '<path d="M4 1v13h12M4 9h5v5"/>',
    polar: '<circle cx="7" cy="9" r="5"/><path d="M7 9l7-7M7 9h7"/>',
    osnap: '<path d="M2 2h12v12H2z" fill="#fff" stroke="#5d7686" stroke-width="2"/>',
    osnap3d: '<path d="M5 2h10v9H5z" fill="#fff"/><circle cx="4" cy="12" r="3" fill="#eeb478"/>',
    otrack: `<path d="M13 2L3 13h12" stroke="#26708a" stroke-width="2"/>`,
    ducs: `<path d="M2 2v12h12M2 14l9-9"/><circle cx="12" cy="4" r="2" fill="${Y}" stroke="${Y}"/>`,
    dyn: '<path d="M1 6h9M5 2v9M8 9h6v4H8z" stroke-width="2"/>',
    lwt: '<path d="M1 8h14M8 2v12" stroke-width="2"/>',
    tpy: `<path d="M2 2h12v12H2z" fill="#8cbbe8" stroke="${B}" stroke-dasharray="2 1"/>`,
    qp: '<path d="M4 2h8v12H4zM7 5h3v5H7z" stroke-width="2"/>',
    sc: '<path d="M3 3h7v7H3z"/><circle cx="11" cy="11" r="3" fill="#58b84a" stroke="#3c8a30"/>',
    plus: '<path d="M6 1h4v5h5v4h-5v5H6v-5H1V6h5z" fill="#fff" stroke="#777"/>',
    gear: '<circle cx="8" cy="8" r="5"/><circle cx="8" cy="8" r="2"/><path d="M8 0v3M8 13v3M0 8h3M13 8h3M2 2l3 3M11 11l3 3M14 2l-3 3M2 14l3-3"/>',
    acad: '<path d="M0 0h16v16H0z" fill="#e8e0e0" stroke="none"/><path d="M2 14L7 2h3l4 12-5-3z" fill="#c81e1e" stroke="#a01212"/>',
    folder: '<path d="M2 2h5v12H2z" fill="#fff0a8" stroke="#d8b440"/><path d="M7 3h6v12H7z" fill="#f5cf50" stroke="#c89c28"/>'
};

function draw(name) {
    return `<svg viewBox="0 0 16 16" fill="none" stroke="currentColor">${icons[name]}</svg>`;
}

document.querySelectorAll('[data-icons]').forEach(box => {
    box.innerHTML = box.dataset.icons.split(' ').map(word => {
        if (word === '|') return '<i class="sep"></i>';
        if (word === '.') return '<i class="drop"><i class="tri"></i></i>';
        const name = word.replace('*', '');
        return `<button class="tool${word.endsWith('*') ? ' on' : ''}" aria-label="${name}">${draw(name)}</button>`;
    }).join('');
});

document.querySelectorAll('[data-icon]').forEach(el => {
    el.innerHTML = draw(el.dataset.icon);
});
```
